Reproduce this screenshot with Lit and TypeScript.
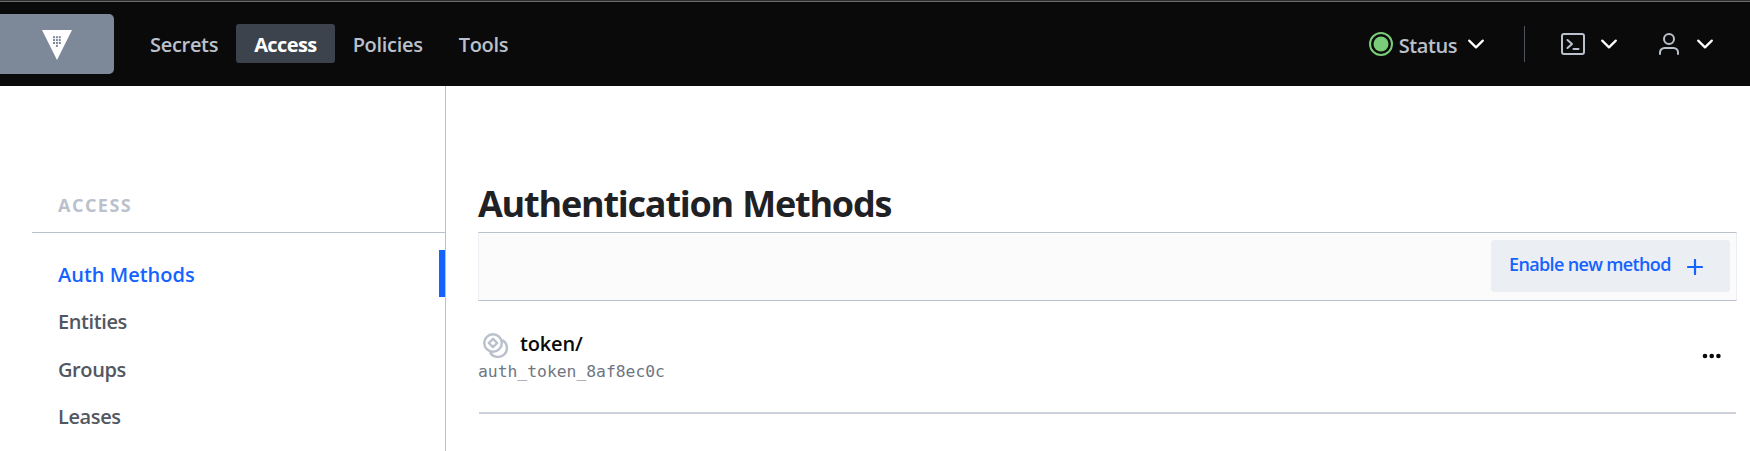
import { LitElement, html, css, svg } from "lit";
import { customElement } from "lit/decorators.js";

const chevron = html`<svg class="chevron" viewBox="0 0 16 10"><path d="M1.2 1.600 8 8.400l6.800-6.800" /></svg>`;
const dots = [
  [11, 6.2], [13.9, 6.2], [16.8, 6.2],
  [11, 9.1], [13.9, 9.1], [16.8, 9.1],
  [11, 12], [13.9, 12], [16.8, 12],
  [13.9, 14.900],
];

@customElement("app-root")
export class AppRoot extends LitElement {
  static styles = css`
    :host {
      display: flex;
      flex-direction: column;
      height: 451px;
      overflow: hidden;
      background: #fff;
      font-family: "Open Sans", "Noto Sans", sans-serif;
      font-weight: 600;
      font-size: 20px;
      letter-spacing: -0.3px;
    }
    * { box-sizing: border-box; }
    svg { display: block; flex: none; fill: none; stroke: currentColor; stroke-width: 2; stroke-linecap: round; stroke-linejoin: round; }
    header {
      flex: none; display: flex; align-items: center; height: 86px; padding-top: 1px;
      background: #0a0a0a; color: #bac1cc; border-top: 1px solid #2e2e2e;
      box-shadow: inset 0 1px #6b6b6b;
    }
    .brand { width: 114px; height: 60px; background: #7d8999; border-radius: 0 5px 5px 0; display: grid; place-items: center; }
    .brand svg { width: 30px; height: 30px; stroke: none; fill: #fff; margin-top: 2px; }
    nav { display: flex; margin: 0 0 1px 18px; }
    .tab { height: 39px; line-height: 42px; padding: 0 18px; border-radius: 3px; white-space: nowrap; }
    .tab.on { background: #3d434d; color: #fff; font-weight: 700; letter-spacing: -0.6px; }
    .tools { margin-left: auto; display: flex; align-items: center; padding-right: 37px; }
    .light { width: 24px; height: 24px; color: #7acc79; }
    .light .core { fill: currentColor; stroke: none; }
    .status { margin-left: 6px; line-height: 28px; padding-top: 4px; letter-spacing: -0.45px; }
    .chevron { width: 16px; height: 10px; color: #fff; stroke-width: 2.2; }
    .rule { width: 1px; height: 36px; background: #4f555e; margin: 0 36px 0 40px; }
    .c1 { margin-left: 11px; } .c2 { margin: 0 42px 0 16px; } .c3 { margin-left: 18px; }
    .term { width: 24px; height: 22px; } .user { width: 20px; height: 22px; }
    .body { flex: 1; display: flex; }
    aside { width: 446px; border-right: 1px solid #bac1cc; padding: 98px 0 0 32px; }
    .label { height: 49px; padding: 6px 0 0 26px; border-bottom: 1px solid #bac1cc; color: #bac1cc; font-size: 18px; font-weight: 700; line-height: 30px; letter-spacing: 1.5px; }
    .menu { padding-top: 17px; }
    .link { height: 47.5px; line-height: 49px; padding-left: 26px; color: #525761; letter-spacing: -0.4px; }
    .link.on { height: 47px; color: #1563ff; border-right: 6px solid #1563ff; letter-spacing: 0; }
    main { flex: 1; padding: 91px 13px 0 32px; }
    h1 { margin: 0; height: 55px; line-height: 53px; font-size: 36px; font-weight: 700; letter-spacing: -1.22px; word-spacing: 1px; color: #1f2124; white-space: nowrap; }
    .toolbar { height: 69px; border: 1px solid #ebeef2; border-top-color: #bac1cc; border-bottom-color: #bac1cc; background: #fbfbfc; display: flex; justify-content: flex-end; align-items: flex-start; padding: 7px 6px; }
    .enable { width: 239px; height: 52px; border-radius: 3px; background: #ebeef2; color: #1563ff; padding: 0 0 4px 18px; display: flex; align-items: center; font-size: 18px; letter-spacing: -0.64px; white-space: nowrap; }
    .enable svg { width: 16px; height: 16px; margin: 5px 0 0 16px; stroke-width: 2.200; }
    .row { display: flex; align-items: center; justify-content: space-between; height: 113px; margin: 0 1px; border-bottom: 2px solid #ccd1da; padding-right: 14px; }
    .name { display: flex; align-items: center; gap: 12px; color: #0a0a0a; padding-left: 4px; line-height: 28px; letter-spacing: -0.15px; }
    .coin { width: 25px; height: 25px; color: #bac1cc; margin-top: 4px; stroke-width: 2.4; }
    .acc { font: 400 16.35px/28px "DejaVu Sans Mono", monospace; letter-spacing: 0; color: #6f7682; margin: 0 0 -2px -1px; }
    .more { width: 20px; height: 6px; fill: #0a0a0a; stroke: none; margin-top: -2px; }
  `;

  render() {
    return html`
      <header>
        <div class="brand"><svg viewBox="0 0 30 30"><path d="M0 0h30L15 30z" />${dots.map(([x, y]) => svg`<rect x=${x} y=${y} width="2" height="2" fill="#7d8999" />`)}</svg></div>
        <nav>
          <span class="tab">Secrets</span><span class="tab on">Access</span><span class="tab">Policies</span><span class="tab">Tools</span>
        </nav>
        <div class="tools">
          <svg class="light" viewBox="0 0 24 24"><circle cx="12" cy="12" r="11" /><circle class="core" cx="12" cy="12" r="7.5" /></svg>
          <span class="status">Status</span><span class="c1">${chevron}</span>
          <i class="rule"></i>
          <svg class="term" viewBox="0 0 24 22"><rect x="1" y="1" width="22" height="20" rx="2" /><path d="m6.500 7 4.500 4-4.500 4M12.500 16h5" /></svg>
          <span class="c2">${chevron}</span>
          <svg class="user" viewBox="0 0 20 22"><circle cx="10" cy="6" r="5" /><path d="M1 21v-1.500a4.500 4.500 0 0 1 4.500-4.500h9a4.500 4.500 0 0 1 4.500 4.500V21" /></svg>
          <span class="c3">${chevron}</span>
        </div>
      </header>
      <div class="body">
        <aside>
          <div class="label">ACCESS</div>
          <div class="menu">
            <div class="link on">Auth Methods</div><div class="link">Entities</div><div class="link">Groups</div><div class="link">Leases</div>
          </div>
        </aside>
        <main>
          <h1>Authentication Methods</h1>
          <div class="toolbar"><div class="enable"><span>Enable new method</span><svg viewBox="0 0 16 16"><path d="M8 1v14M1 8h14" /></svg></div></div>
          <div class="row">
            <div>
              <div class="name"><svg class="coin" viewBox="0 0 25 25"><circle cx="10" cy="10" r="8.800" /><path d="m10 5.800 4.200 4.200-4.200 4.200L5.800 10zM20 7.500a9 9 0 1 1-12.500 12.500" /></svg><span>token/</span></div>
              <div class="acc">auth_token_8af8ec0c</div>
            </div>
            <svg class="more" viewBox="0 0 20 6"><circle cx="3" cy="3" r="2.300" /><circle cx="9.700" cy="3" r="2.300" /><circle cx="16.400" cy="3" r="2.300" /></svg>
          </div>
        </main>
      </div>`;
  }
}
